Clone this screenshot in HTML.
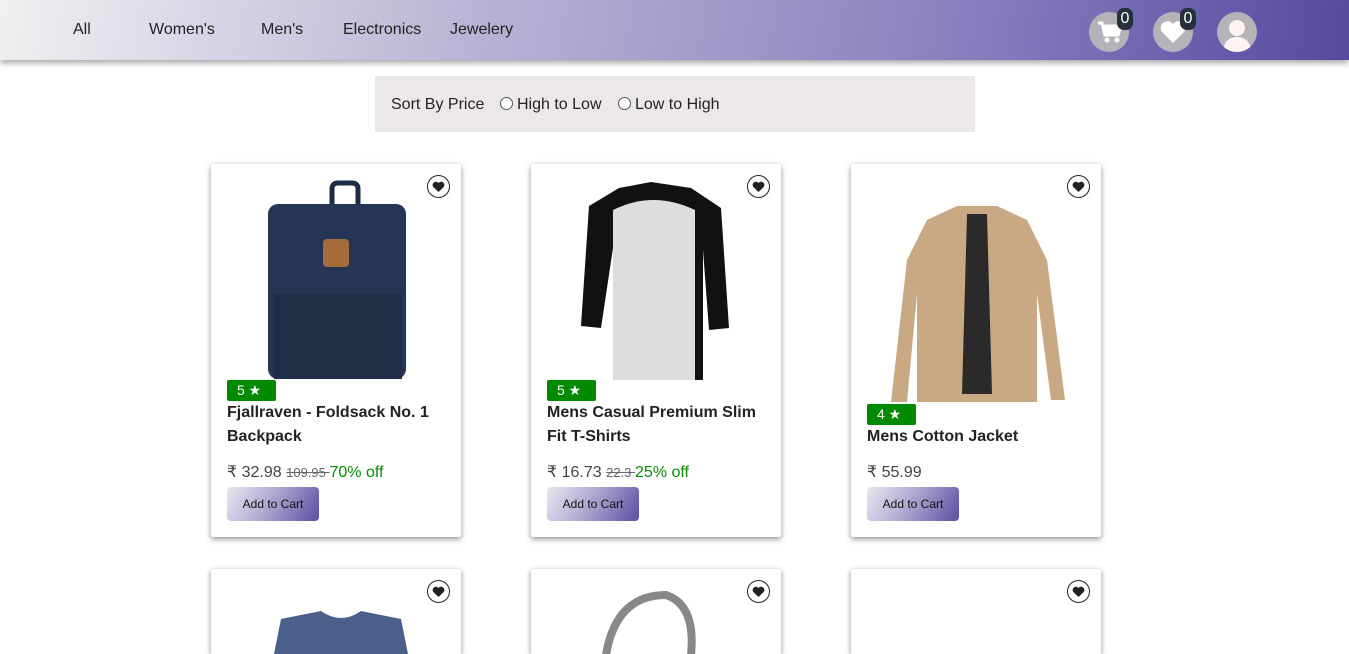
<!DOCTYPE html>
<html><head><meta charset="utf-8"><style>
*{box-sizing:border-box;margin:0;padding:0}
html{width:1349px;height:654px;overflow:hidden}
body{width:1349px;height:654px;overflow:hidden;background:#fff;font-family:"Liberation Sans",Arial,sans-serif;color:#222;position:relative}
.hdr{position:absolute;left:0;top:0;width:1349px;height:60px;background:linear-gradient(100deg,#f0f0f0 0%,#b8b4d6 35%,#8a82bf 70%,#5549a0 100%);box-shadow:0 3px 6px rgba(0,0,0,.35)}
.nav{position:absolute;top:21px;font-size:16px;color:#222}
.ic{position:absolute;top:12px;width:40px;height:40px;border-radius:50%;background:#b5b3b8;overflow:hidden}
.badge{position:absolute;top:8px;width:16px;height:22px;border-radius:7px;background:#26303a;color:#fff;font-size:16px;text-align:center;line-height:22px}
.sort{position:absolute;left:375px;top:76px;width:600px;height:56px;background:#ece8e8;font-size:16px;color:#222}
.sort span{position:absolute;top:20px}
.rad{position:absolute;top:21px;width:13px;height:13px;border:1px solid #555;border-radius:50%;background:#fff}
.card{position:absolute;width:250px;height:373px;background:#fff;box-shadow:0 2px 6px rgba(0,0,0,.45);border-radius:2px;overflow:hidden}
.card.r2{height:85px;border-radius:2px 2px 0 0}
.heart{position:absolute;right:11px;top:11px;width:23px;height:23px;border:1.5px solid #222;border-radius:50%;display:flex;align-items:center;justify-content:center}
.rate{position:absolute;left:16px;width:49px;height:21px;background:#008a00;color:#fff;font-size:14px;line-height:21px;padding-left:10px;border-radius:2px}
.title{position:absolute;left:16px;width:220px;font-weight:bold;font-size:16px;line-height:24px;color:#222}
.price{position:absolute;left:16px;font-size:16px;color:#444}
.price s{font-size:13px;color:#666}
.price b{font-weight:normal;color:#0a8a0a}
.btn{position:absolute;left:16px;width:92px;height:34px;border-radius:4px;background:linear-gradient(120deg,#e8e6f0,#b0aad2 45%,#5a4ea0);font-size:12px;color:#111;text-align:center;line-height:34px}
</style></head><body>
<div class="hdr">
<div class="nav" style="left:73px">All</div>
<div class="nav" style="left:149px">Women's</div>
<div class="nav" style="left:261px">Men's</div>
<div class="nav" style="left:343px">Electronics</div>
<div class="nav" style="left:450px">Jewelery</div>
<div class="ic" style="left:1089px"><svg width="40" height="40" viewBox="0 0 40 40"><path d="M9 11h4l3 12h13l3-9H15" fill="none" stroke="#fff" stroke-width="3"/><path d="M15 14h17l-3 9H17z" fill="#fff"/><circle cx="18" cy="28" r="2.5" fill="#fff"/><circle cx="28" cy="28" r="2.5" fill="#fff"/></svg></div>
<div class="badge" style="left:1117px">0</div>
<div class="ic" style="left:1153px"><svg width="40" height="40" viewBox="0 0 40 40"><path d="M20 31L9 20a6 6 0 0 1 11-8a6 6 0 0 1 11 8z" fill="#fff"/></svg></div>
<div class="badge" style="left:1180px">0</div>
<div class="ic" style="left:1217px"><svg width="40" height="40" viewBox="0 0 40 40"><circle cx="20" cy="16" r="8" fill="#fdf3f3"/><path d="M6 40c0-10 6-15 14-15s14 5 14 15z" fill="#fdf3f3"/></svg></div>
</div>
<div class="sort"><span style="left:16px">Sort By Price</span><div class="rad" style="left:125px"></div><span style="left:142px">High to Low</span><div class="rad" style="left:243px"></div><span style="left:260px">Low to High</span></div>

<div class="card" style="left:211px;top:164px">
<div class="heart"><svg width="13" height="12" viewBox="0 0 13 12"><path d="M6.5 11L1.3 6A3 3 0 0 1 6.5 2A3 3 0 0 1 11.7 6z" fill="#222"/></svg></div>
<svg style="position:absolute;left:55px;top:15px" width="140" height="202" viewBox="0 0 140 202"><path d="M66 26V10q0-6 6-6h14q6 0 6 6v16" fill="none" stroke="#1e2b44" stroke-width="5"/><rect x="2" y="25" width="138" height="175" rx="10" fill="#253553"/><rect x="8" y="115" width="128" height="85" fill="#1f2d47"/><rect x="57" y="60" width="26" height="28" rx="4" fill="#a66d3a"/></svg>
<div class="rate" style="top:216px">5 ★</div>
<div class="title" style="top:237px">Fjallraven - Foldsack No. 1 Backpack</div>
<div class="price" style="top:298px">₹ 32.98 <s>109.95 </s> <b>70% off</b></div>
<div class="btn" style="top:323px">Add to Cart</div>
</div>

<div class="card" style="left:531px;top:164px">
<div class="heart"><svg width="13" height="12" viewBox="0 0 13 12"><path d="M6.5 11L1.3 6A3 3 0 0 1 6.5 2A3 3 0 0 1 11.7 6z" fill="#222"/></svg></div>
<svg style="position:absolute;left:48px;top:16px" width="152" height="200" viewBox="0 0 152 200"><path d="M40 8l32-6 40 6 30 20 8 120-20 2-6-80v140H34V68l-12 80-20-2 8-120z" fill="#111"/><path d="M34 30q40-20 82 0v170H34z" fill="#ddd"/></svg>
<div class="rate" style="top:216px">5 ★</div>
<div class="title" style="top:237px">Mens Casual Premium Slim Fit T-Shirts</div>
<div class="price" style="top:298px">₹ 16.73 <s>22.3 </s> <b>25% off</b></div>
<div class="btn" style="top:323px">Add to Cart</div>
</div>

<div class="card" style="left:851px;top:164px">
<div class="heart"><svg width="13" height="12" viewBox="0 0 13 12"><path d="M6.5 11L1.3 6A3 3 0 0 1 6.5 2A3 3 0 0 1 11.7 6z" fill="#222"/></svg></div>
<svg style="position:absolute;left:36px;top:40px" width="180" height="198" viewBox="0 0 180 198"><path d="M70 2h40l30 14 20 40 18 140h-14L150 90v108H30V90l-10 108H4L20 56l20-40z" fill="#c8a983"/><path d="M80 10h20l5 180H75z" fill="#2a2a2a"/></svg>
<div class="rate" style="top:240px">4 ★</div>
<div class="title" style="top:261px">Mens Cotton Jacket</div>
<div class="price" style="top:298px">₹ 55.99</div>
<div class="btn" style="top:323px">Add to Cart</div>
</div>

<div class="card r2" style="left:211px;top:569px">
<div class="heart"><svg width="13" height="12" viewBox="0 0 13 12"><path d="M6.5 11L1.3 6A3 3 0 0 1 6.5 2A3 3 0 0 1 11.7 6z" fill="#222"/></svg></div>
<svg style="position:absolute;left:60px;top:40px" width="140" height="45" viewBox="0 0 140 45"><path d="M10 10l40-8q20 14 40 0l40 8 8 40H2z" fill="#4a5f8a"/></svg>
</div>
<div class="card r2" style="left:531px;top:569px">
<div class="heart"><svg width="13" height="12" viewBox="0 0 13 12"><path d="M6.5 11L1.3 6A3 3 0 0 1 6.5 2A3 3 0 0 1 11.7 6z" fill="#222"/></svg></div>
<svg style="position:absolute;left:65px;top:16px" width="110" height="69" viewBox="0 0 110 69"><path d="M10 70Q20 10 70 10Q100 20 95 70" fill="none" stroke="#888" stroke-width="8"/></svg>
</div>
<div class="card r2" style="left:851px;top:569px">
<div class="heart"><svg width="13" height="12" viewBox="0 0 13 12"><path d="M6.5 11L1.3 6A3 3 0 0 1 6.5 2A3 3 0 0 1 11.7 6z" fill="#222"/></svg></div>
</div>
</body></html>
